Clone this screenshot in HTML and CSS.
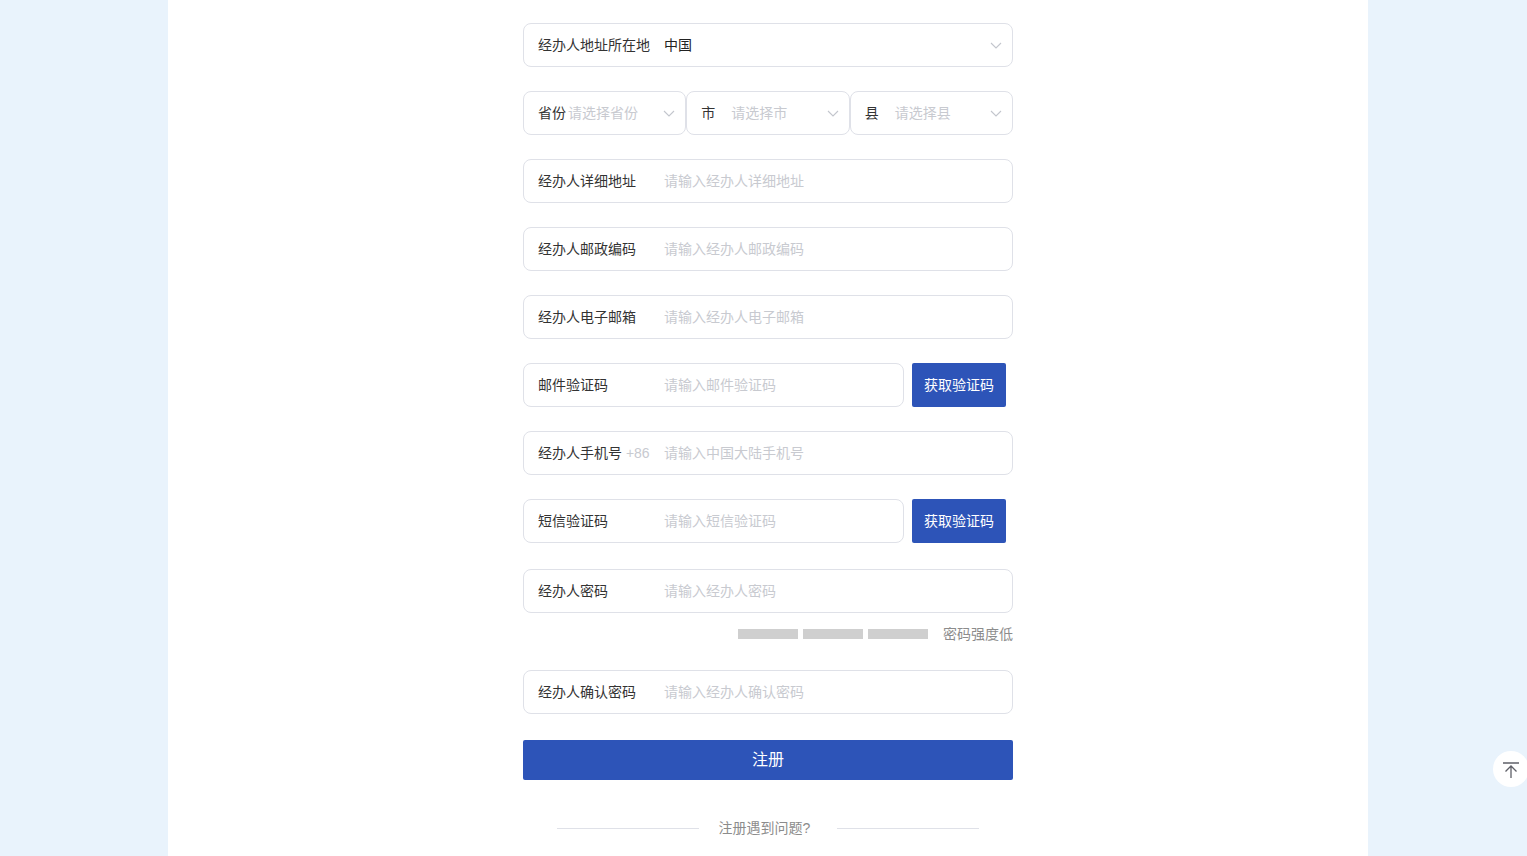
FILE: index.html
```html
<!DOCTYPE html>
<html lang="zh-CN">
<head>
<meta charset="utf-8">
<title>注册</title>
<link rel="stylesheet" href="styles.css">
</head>
<body>
<main class="sheet">
  <form class="form">
    <div class="row">
      <div class="field">
        <span class="label">经办人地址所在地</span>
        <span class="value">中国</span>
        <svg class="chev" viewBox="0 0 12 7"><path d="M1 1l5 5 5-5"/></svg>
      </div>
    </div>
    <div class="row triple">
      <div class="field compact">
        <span class="label tight">省份</span>
        <span class="ph">请选择省份</span>
        <svg class="chev" viewBox="0 0 12 7"><path d="M1 1l5 5 5-5"/></svg>
      </div>
      <div class="field compact">
        <span class="label short">市</span>
        <span class="ph">请选择市</span>
        <svg class="chev" viewBox="0 0 12 7"><path d="M1 1l5 5 5-5"/></svg>
      </div>
      <div class="field compact">
        <span class="label short">县</span>
        <span class="ph">请选择县</span>
        <svg class="chev" viewBox="0 0 12 7"><path d="M1 1l5 5 5-5"/></svg>
      </div>
    </div>
    <div class="row"><div class="field"><span class="label">经办人详细地址</span><span class="ph">请输入经办人详细地址</span></div></div>
    <div class="row"><div class="field"><span class="label">经办人邮政编码</span><span class="ph">请输入经办人邮政编码</span></div></div>
    <div class="row"><div class="field"><span class="label">经办人电子邮箱</span><span class="ph">请输入经办人电子邮箱</span></div></div>
    <div class="row code">
      <div class="field"><span class="label">邮件验证码</span><span class="ph">请输入邮件验证码</span></div>
      <button class="btn-code" type="button">获取验证码</button>
    </div>
    <div class="row"><div class="field"><span class="label">经办人手机号 <span class="prefix">+86</span></span><span class="ph">请输入中国大陆手机号</span></div></div>
    <div class="row code wide-gap">
      <div class="field"><span class="label">短信验证码</span><span class="ph">请输入短信验证码</span></div>
      <button class="btn-code" type="button">获取验证码</button>
    </div>
    <div class="row"><div class="field"><span class="label">经办人密码</span><span class="ph">请输入经办人密码</span></div></div>
    <div class="strength">
      <i class="bar"></i><i class="bar"></i><i class="bar"></i>
      <span class="strength-text">密码强度低</span>
    </div>
    <div class="row"><div class="field"><span class="label">经办人确认密码</span><span class="ph">请输入经办人确认密码</span></div></div>
    <button class="submit" type="button">注册</button>
    <div class="help">
      <span class="rule"></span>
      <span class="help-text">注册遇到问题?</span>
      <span class="rule"></span>
    </div>
  </form>
</main>
<button class="to-top" type="button" aria-label="返回顶部">
  <svg viewBox="0 0 16 16" width="16" height="16"><path d="M0 1h16M8 16V4M2.500 9.500L8 4l5.500 5.500"/></svg>
</button>
</body>
</html>
```
FILE: styles.css
```css
* { box-sizing: border-box; }
html, body { height: 100%; }
body {
  margin: 0;
  background: #e9f3fc;
  overflow: hidden;
  font-family: "Liberation Sans", "Noto Sans CJK SC", sans-serif;
  font-size: 14px;
  color: #333;
}
.sheet {
  width: 1200px;
  height: 856px;
  margin-left: 168px;
  background: #fff;
  overflow: hidden;
}
.form {
  width: 490px;
  margin-left: 355px;
  padding-top: 23px;
}
.row {
  display: flex;
  margin-bottom: 24px;
}
.row.wide-gap { margin-bottom: 26px; }
.field {
  flex: 1;
  min-width: 0;
  height: 44px;
  display: flex;
  align-items: center;
  padding: 0 14px 2px;
  background: #fff;
  border: 1px solid #dfe1e8;
  border-radius: 8px;
  white-space: nowrap;
}
.label {
  width: 126px;
  flex: none;
}
.label.tight { width: 30px; }
.label.short { width: 30px; }
.value { color: #222; }
.ph, .prefix { color: #c8cad0; }
.chev {
  width: 12px;
  height: 7px;
  margin-top: 2px;
  margin-left: auto;
  margin-right: -4px;
  fill: none;
  stroke: #c3c6cd;
  stroke-width: 1.1;
}
.compact { flex: 1 1 0; }
.code .field { flex: none; width: 381px; }
.btn-code {
  width: 94px;
  height: 44px;
  margin-left: 8px;
  padding: 0 0 2px;
  border: 0;
  border-radius: 2px;
  background: #2d54b8;
  color: #fff;
  font: inherit;
}
.strength {
  display: flex;
  align-items: center;
  justify-content: flex-end;
  height: 20px;
  margin-top: -14px;
  margin-bottom: 27px;
  color: #8c8c8c;
}
.bar {
  width: 60px;
  height: 10px;
  margin-top: 1px;
  margin-right: 5px;
  background: #cfcfcf;
}
.strength-text { margin-left: 10px; }
.submit {
  display: block;
  width: 490px;
  height: 40px;
  margin-top: 26px;
  padding: 0 0 4px;
  border: 0;
  border-radius: 2px;
  background: #2d54b8;
  color: #fff;
  font: inherit;
  font-size: 16px;
}
.help {
  display: flex;
  align-items: center;
  justify-content: center;
  margin-top: 38px;
  height: 20px;
  color: #8c8c8c;
}
.rule {
  width: 142px;
  height: 1px;
  background: #dfe1e8;
}
.help-text { margin: 0 27px 2px 20px; }
.to-top {
  position: fixed;
  left: 1493px;
  top: 751px;
  width: 36px;
  height: 36px;
  padding: 2px 0 0 10px;
  border: 0;
  border-radius: 50%;
  background: #fff;
  display: flex;
  align-items: center;
}
.to-top svg {
  fill: none;
  stroke: #5f6068;
  stroke-width: 1.3;
}
```
